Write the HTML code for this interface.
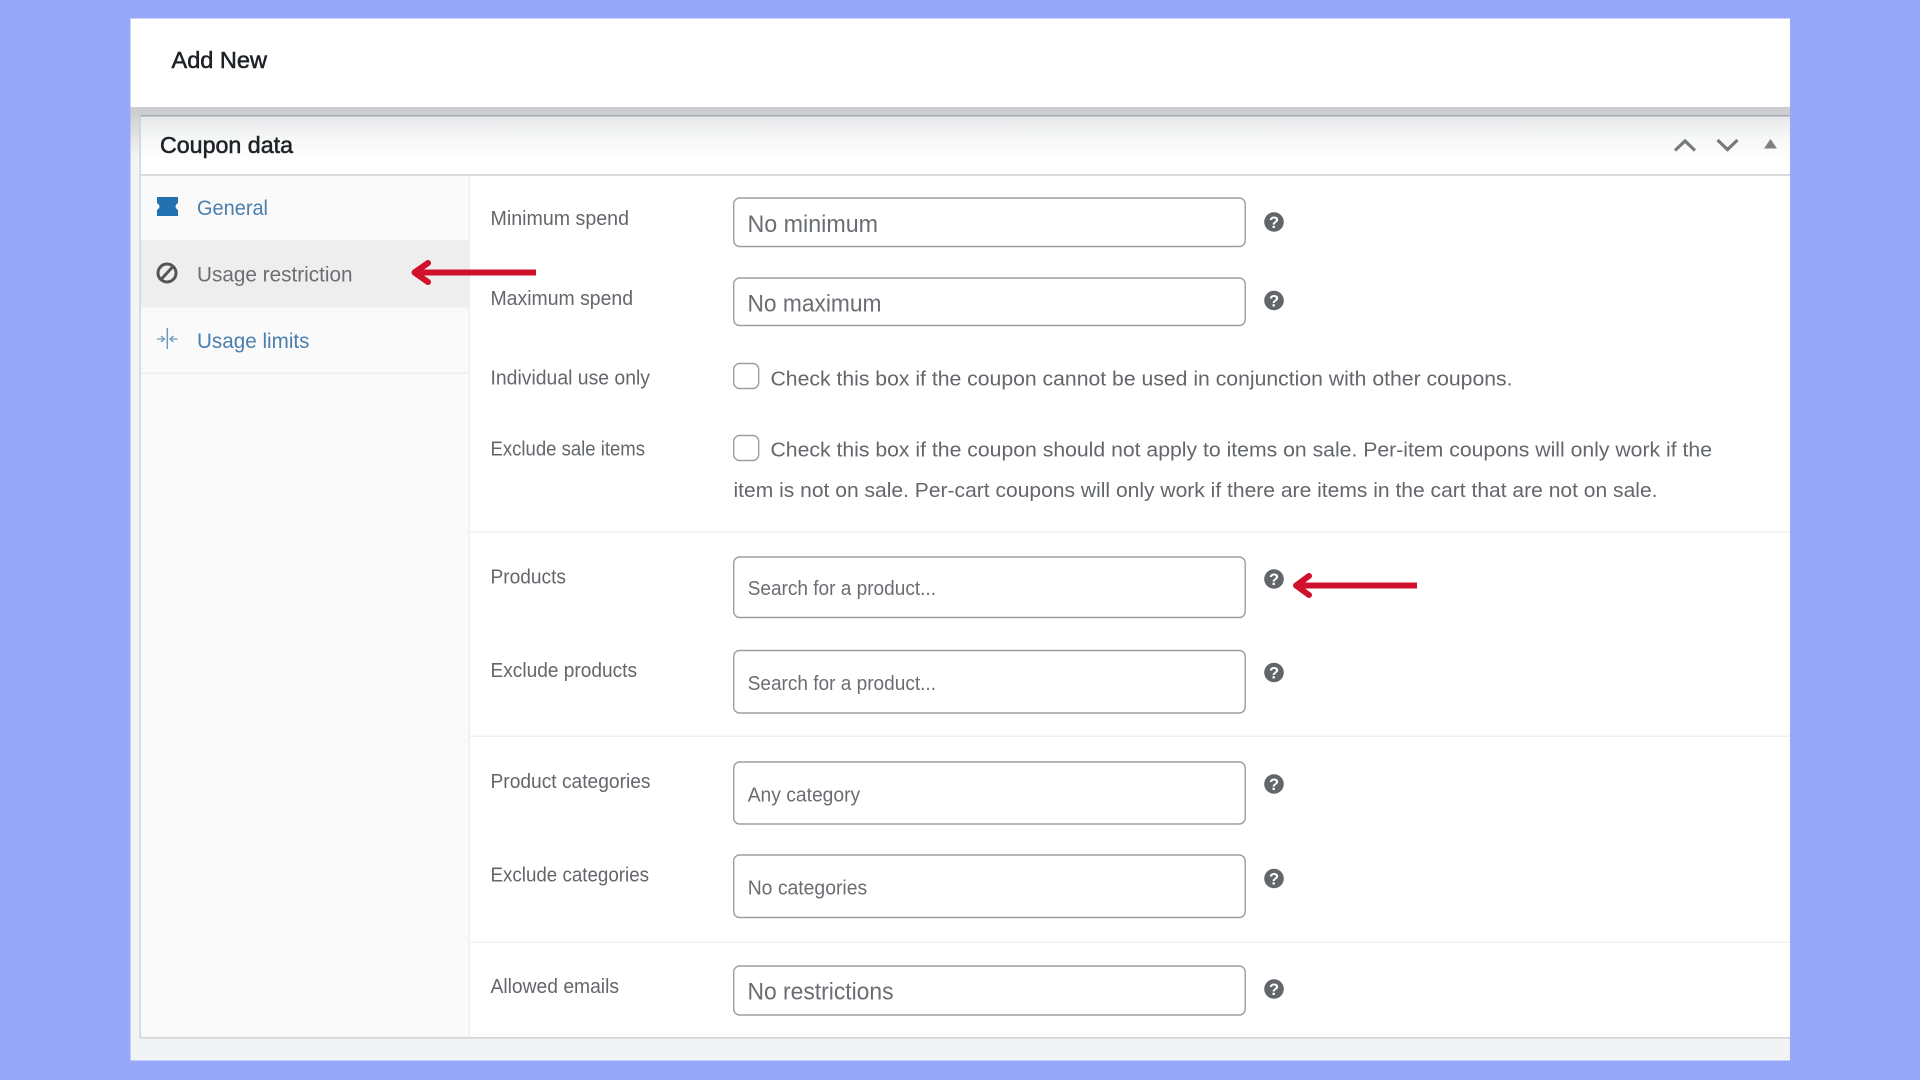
<!DOCTYPE html>
<html lang="en">
<head>
<meta charset="utf-8">
<title>Coupon data</title>
<style>
html,body{margin:0;padding:0;width:1920px;height:1080px;overflow:hidden;background:#97a8fa}
svg{display:block}
text{font-family:"Liberation Sans",sans-serif;white-space:pre}
.lb{font-size:20px;fill:#63676b}
.ph{font-size:24px;fill:#6a6e72}
.ps{font-size:20px;fill:#6a6e72}
.ck{font-size:20.5px;fill:#63676b}
.inp{fill:#fff;stroke:#9a9ea3;stroke-width:1.4}
.hl{font-size:16.500px;font-weight:700;fill:#fff;text-anchor:middle}
</style>
</head>
<body>
<svg width="1920" height="1080" viewBox="0 0 1920 1080" xmlns="http://www.w3.org/2000/svg">
<defs>
<linearGradient id="hd" x1="0" y1="0" x2="0" y2="1">
<stop offset="0" stop-color="#e6e7e9"/><stop offset=".35" stop-color="#f5f6f6"/><stop offset=".75" stop-color="#fff"/>
</linearGradient>
<linearGradient id="sd" x1="0" y1="0" x2="0" y2="1">
<stop offset="0" stop-color="#d0d1d5"/><stop offset="1" stop-color="#f1f2f3"/>
</linearGradient>
</defs>

<rect x="130.500" y="18.500" width="1659.500" height="1042" fill="#f2f3f5"/>
<rect x="130.500" y="18.500" width="1659.500" height="88.500" fill="#fff"/>
<rect x="130.500" y="107" width="1659.500" height="8" fill="#cdced2"/>
<rect x="130.500" y="115" width="9" height="40" fill="url(#sd)"/>

<!-- box -->
<rect x="139.500" y="115" width="1650.500" height="923" fill="#fff"/>
<rect x="139.500" y="115" width="1650.500" height="60" fill="url(#hd)"/>
<rect x="139.500" y="115" width="1650.500" height="1.500" fill="#a5a8ac"/>
<rect x="141" y="175" width="327.500" height="862" fill="#fafafa"/>
<rect x="141" y="240" width="327.500" height="67" fill="#eeeeee"/>
<rect x="141" y="372.500" width="327.500" height="1.500" fill="#efefef"/>
<rect x="141" y="306.500" width="327.500" height="1" fill="#f0f0f0"/>
<rect x="468.500" y="175" width="1.500" height="862" fill="#efefef"/>
<rect x="139.500" y="174" width="1650.500" height="1.800" fill="#d6d7d9"/>
<rect x="139.500" y="115" width="1.300" height="923" fill="#cbccce"/>
<rect x="139.500" y="1037" width="1650.500" height="1.600" fill="#d2d3d6"/>
<rect x="470" y="531" width="1320" height="1.500" fill="#f0f0f0"/>
<rect x="470" y="735.500" width="1320" height="1.500" fill="#f0f0f0"/>
<rect x="470" y="941.500" width="1320" height="1.500" fill="#f0f0f0"/>

<!-- header text -->
<text x="171.500" y="68" font-size="23" fill="#1f2226" stroke="#1f2226" stroke-width=".55" textLength="95.500" lengthAdjust="spacingAndGlyphs">Add New</text>
<text x="160" y="153" font-size="23" fill="#1f2226" stroke="#1f2226" stroke-width=".55" textLength="133" lengthAdjust="spacingAndGlyphs">Coupon data</text>

<!-- header controls -->
<path d="M1675 150.500 L1685 141 L1695 150.500" fill="none" stroke="#777a7e" stroke-width="3.200"/>
<path d="M1717.500 140 L1727.500 149.500 L1737.500 140" fill="none" stroke="#777a7e" stroke-width="3.200"/>
<path d="M1764 148.500 L1770.500 139 L1777 148.500 Z" fill="#7d8084"/>

<!-- tabs -->
<path d="M157 197 H178 V203 Q173 206.500 178 210 V216 H157 V210 Q162 206.500 157 203 Z" fill="#2271b1"/>
<text x="197" y="215" font-size="21" fill="#4a7fad" textLength="71" lengthAdjust="spacingAndGlyphs">General</text>
<circle cx="167" cy="273" r="9" fill="none" stroke="#555" stroke-width="3"/>
<path d="M161 279.500 L173 266.500" stroke="#555" stroke-width="3"/>
<text x="197" y="281.500" font-size="21" fill="#6b6f73" textLength="155.500" lengthAdjust="spacingAndGlyphs">Usage restriction</text>
<path d="M167.300 328 V349" stroke="#6a9ac0" stroke-width="1.500"/>
<path d="M157 339 H164 M161 336 L164.500 339 L161 342 M177.500 339 H170.500 M173.500 336 L170 339 L173.500 342" fill="none" stroke="#6a9ac0" stroke-width="1.300"/>
<text x="197" y="348" font-size="21" fill="#4a7fad" textLength="112.500" lengthAdjust="spacingAndGlyphs">Usage limits</text>

<!-- labels -->
<text class="lb" x="490.500" y="225" textLength="138.500" lengthAdjust="spacingAndGlyphs">Minimum spend</text>
<text class="lb" x="490.500" y="305" textLength="142.500" lengthAdjust="spacingAndGlyphs">Maximum spend</text>
<text class="lb" x="490.500" y="384.500" textLength="159.500" lengthAdjust="spacingAndGlyphs">Individual use only</text>
<text class="lb" x="490.500" y="455.500" textLength="154.500" lengthAdjust="spacingAndGlyphs">Exclude sale items</text>
<text class="lb" x="490.500" y="583.500" textLength="75.500" lengthAdjust="spacingAndGlyphs">Products</text>
<text class="lb" x="490.500" y="677" textLength="146.500" lengthAdjust="spacingAndGlyphs">Exclude products</text>
<text class="lb" x="490.500" y="788" textLength="160" lengthAdjust="spacingAndGlyphs">Product categories</text>
<text class="lb" x="490.500" y="881.500" textLength="158.500" lengthAdjust="spacingAndGlyphs">Exclude categories</text>
<text class="lb" x="490.500" y="993" textLength="128.500" lengthAdjust="spacingAndGlyphs">Allowed emails</text>

<!-- inputs -->
<rect class="inp" x="733.700" y="198" width="511.500" height="48.500" rx="6"/>
<rect class="inp" x="733.700" y="278" width="511.500" height="47.500" rx="6"/>
<rect class="inp" x="733.700" y="557" width="511.500" height="60.500" rx="6"/>
<rect class="inp" x="733.700" y="650.500" width="511.500" height="62.500" rx="6"/>
<rect class="inp" x="733.700" y="762" width="511.500" height="62" rx="6"/>
<rect class="inp" x="733.700" y="855" width="511.500" height="62.500" rx="6"/>
<rect class="inp" x="733.700" y="966" width="511.500" height="49" rx="6"/>

<text class="ph" x="747.500" y="232" textLength="130.500" lengthAdjust="spacingAndGlyphs">No minimum</text>
<text class="ph" x="747.500" y="311.500" textLength="134" lengthAdjust="spacingAndGlyphs">No maximum</text>
<text class="ps" x="747.700" y="595" textLength="188.300" lengthAdjust="spacingAndGlyphs">Search for a product...</text>
<text class="ps" x="747.700" y="690" textLength="188.300" lengthAdjust="spacingAndGlyphs">Search for a product...</text>
<text class="ps" x="747.700" y="801.500" textLength="112.500" lengthAdjust="spacingAndGlyphs">Any category</text>
<text class="ps" x="747.700" y="894.500" textLength="119.500" lengthAdjust="spacingAndGlyphs">No categories</text>
<text class="ph" x="747.500" y="999.500" textLength="146" lengthAdjust="spacingAndGlyphs">No restrictions</text>

<!-- checkboxes -->
<rect class="inp" x="733.700" y="363.500" width="25" height="25" rx="6"/>
<rect class="inp" x="733.700" y="435.500" width="25" height="25" rx="6"/>
<text class="ck" x="770.500" y="385.500" textLength="742" lengthAdjust="spacingAndGlyphs">Check this box if the coupon cannot be used in conjunction with other coupons.</text>
<text class="ck" x="770.500" y="456.500" textLength="941.500" lengthAdjust="spacingAndGlyphs">Check this box if the coupon should not apply to items on sale. Per-item coupons will only work if the</text>
<text class="ck" x="733.500" y="497" textLength="924" lengthAdjust="spacingAndGlyphs">item is not on sale. Per-cart coupons will only work if there are items in the cart that are not on sale.</text>

<!-- help icons -->
<g fill="#62656a">
<circle cx="1274" cy="222" r="9.800"/>
<circle cx="1274" cy="300.500" r="9.800"/>
<circle cx="1274" cy="579" r="9.800"/>
<circle cx="1274" cy="672.500" r="9.800"/>
<circle cx="1274" cy="784" r="9.800"/>
<circle cx="1274" cy="878.500" r="9.800"/>
<circle cx="1274" cy="989" r="9.800"/>
</g>
<text class="hl" x="1274" y="228">?</text>
<text class="hl" x="1274" y="306.500">?</text>
<text class="hl" x="1274" y="585">?</text>
<text class="hl" x="1274" y="678.500">?</text>
<text class="hl" x="1274" y="790">?</text>
<text class="hl" x="1274" y="884.500">?</text>
<text class="hl" x="1274" y="995">?</text>

<!-- red arrows -->
<g fill="none" stroke="#d0112b" stroke-width="6">
<path d="M414.500 272.500 H536"/>
<path d="M428 263 L414.500 272.500 L428 282" stroke-linecap="round" stroke-linejoin="round"/>
<path d="M1296 585.500 H1417"/>
<path d="M1309 576 L1296 585.500 L1309 595" stroke-linecap="round" stroke-linejoin="round"/>
</g>
</svg>
</body>
</html>
